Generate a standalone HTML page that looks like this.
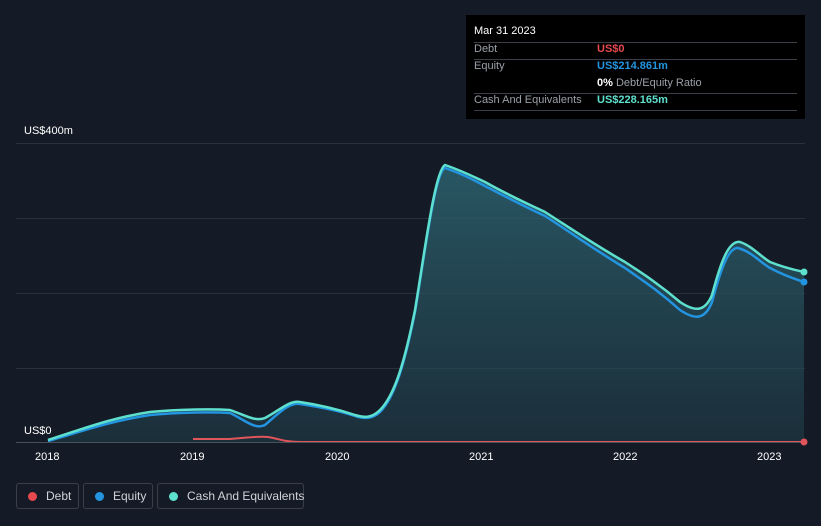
<!DOCTYPE html><html><head><style>
body{margin:0;width:821px;height:526px;background:#151b26;font-family:"Liberation Sans",sans-serif;overflow:hidden;position:relative}
.t{position:absolute;color:#fff;font-size:11px;white-space:nowrap}
.tip{position:absolute;left:466px;top:15px;width:339px;height:104px;background:#000;}
.tip .r{position:absolute;left:8px;right:8px;border-top:1px solid #3a3f47;}
.lg{position:absolute;top:483px;height:26px;border:1px solid #3a3f47;border-radius:3px;color:#d0d3d8;font-size:12px;line-height:24px;box-sizing:border-box;white-space:nowrap}
.lg i{display:inline-block;width:9px;height:9px;border-radius:50%;margin:0 9px 0 11px;vertical-align:-1px}
</style></head><body>
<svg width="821" height="526" style="position:absolute;left:0;top:0">
<defs><linearGradient id="g" x1="0" y1="0" x2="0" y2="1"><stop offset="0" stop-color="#2f6b78" stop-opacity=".75"/><stop offset="1" stop-color="#1f3c48" stop-opacity=".6"/></linearGradient></defs>
<g stroke="#2b313b" stroke-width="1"><line x1="16" x2="805" y1="143.5" y2="143.5"/><line x1="16" x2="805" y1="218.5" y2="218.5"/><line x1="16" x2="805" y1="293.5" y2="293.5"/><line x1="16" x2="805" y1="368.5" y2="368.5"/></g>
<path d="M48,440 C80,430 110,418 150,412 C180,409 215,409 230,410 C245,415 255,422 265,418 C280,410 290,400 300,402 C320,405 340,410 355,415 C365,418 372,418 380,410 C395,395 405,360 415,310 C425,250 435,170 445,165 C460,170 470,175 485,182 C510,196 530,205 545,212 C570,228 595,245 625,262 C645,275 660,285 680,302 C695,312 705,312 712,295 C720,265 728,240 740,242 C752,246 760,256 770,262 C785,268 795,270 804,272 L804,442 L48,442Z" fill="url(#g)"/>
<path d="M48,441 C80,432 110,421 150,415 C180,412 215,412 230,413 C245,420 255,430 265,425 C280,412 290,402 300,404 C320,407 340,411 355,416 C365,419 372,419 380,412 C395,397 405,362 415,312 C425,252 435,172 445,168 C460,173 470,178 485,186 C510,199 530,209 545,216 C570,232 595,250 625,268 C645,282 660,292 680,310 C695,320 705,320 712,302 C720,272 728,247 738,248 C752,252 760,262 770,268 C785,276 795,279 804,282" fill="none" stroke="#2394df" stroke-width="2.5"/>
<path d="M48,440 C80,430 110,418 150,412 C180,409 215,409 230,410 C245,415 255,422 265,418 C280,410 290,400 300,402 C320,405 340,410 355,415 C365,418 372,418 380,410 C395,395 405,360 415,310 C425,250 435,170 445,165 C460,170 470,175 485,182 C510,196 530,205 545,212 C570,228 595,245 625,262 C645,275 660,285 680,302 C695,312 705,312 712,295 C720,265 728,240 740,242 C752,246 760,256 770,262 C785,268 795,270 804,272" fill="none" stroke="#5ee0cf" stroke-width="2.5"/>
<path d="M193,439 L230,439 C245,438 255,436 268,437 C280,439 285,442 300,442 L804,442" fill="none" stroke="#e0555a" stroke-width="2"/>
<line x1="16" x2="805" y1="442.5" y2="442.5" stroke="#4a505a"/>
<circle cx="804" cy="272" r="3.5" fill="#5ee0cf"/><circle cx="804" cy="282" r="3.5" fill="#2394df"/><circle cx="804" cy="442" r="3.5" fill="#e0555a"/>
</svg>
<div class="t" style="left:24px;top:125px">US$400m</div>
<div class="t" style="left:24px;top:425px">US$0</div>
<div class="t" style="left:35px;top:451px">2018</div><div class="t" style="left:180px;top:451px">2019</div><div class="t" style="left:325px;top:451px">2020</div><div class="t" style="left:469px;top:451px">2021</div><div class="t" style="left:613px;top:451px">2022</div><div class="t" style="left:757px;top:451px">2023</div>
<div class="tip">
<div class="t" style="left:8px;top:10px">Mar 31 2023</div>
<div class="r" style="top:27px"></div><div class="r" style="top:44px"></div><div class="r" style="top:78px"></div><div class="r" style="top:95px"></div>
<div class="t" style="left:8px;top:28px;color:#9aa0a8">Debt</div><div class="t" style="left:131px;top:28px;color:#e5484d;font-weight:bold">US$0</div>
<div class="t" style="left:8px;top:45px;color:#9aa0a8">Equity</div><div class="t" style="left:131px;top:45px;color:#2394df;font-weight:bold">US$214.861m</div>
<div class="t" style="left:131px;top:62px;color:#9aa0a8"><b style="color:#fff">0%</b> Debt/Equity Ratio</div>
<div class="t" style="left:8px;top:79px;color:#9aa0a8">Cash And Equivalents</div><div class="t" style="left:131px;top:79px;color:#5ee0cf;font-weight:bold">US$228.165m</div>
</div>
<div class="lg" style="left:16px;width:63px"><i style="background:#e5484d"></i>Debt</div>
<div class="lg" style="left:83px;width:70px"><i style="background:#2394df"></i>Equity</div>
<div class="lg" style="left:157px;width:147px"><i style="background:#5ee0cf"></i>Cash And Equivalents</div>
</body></html>
